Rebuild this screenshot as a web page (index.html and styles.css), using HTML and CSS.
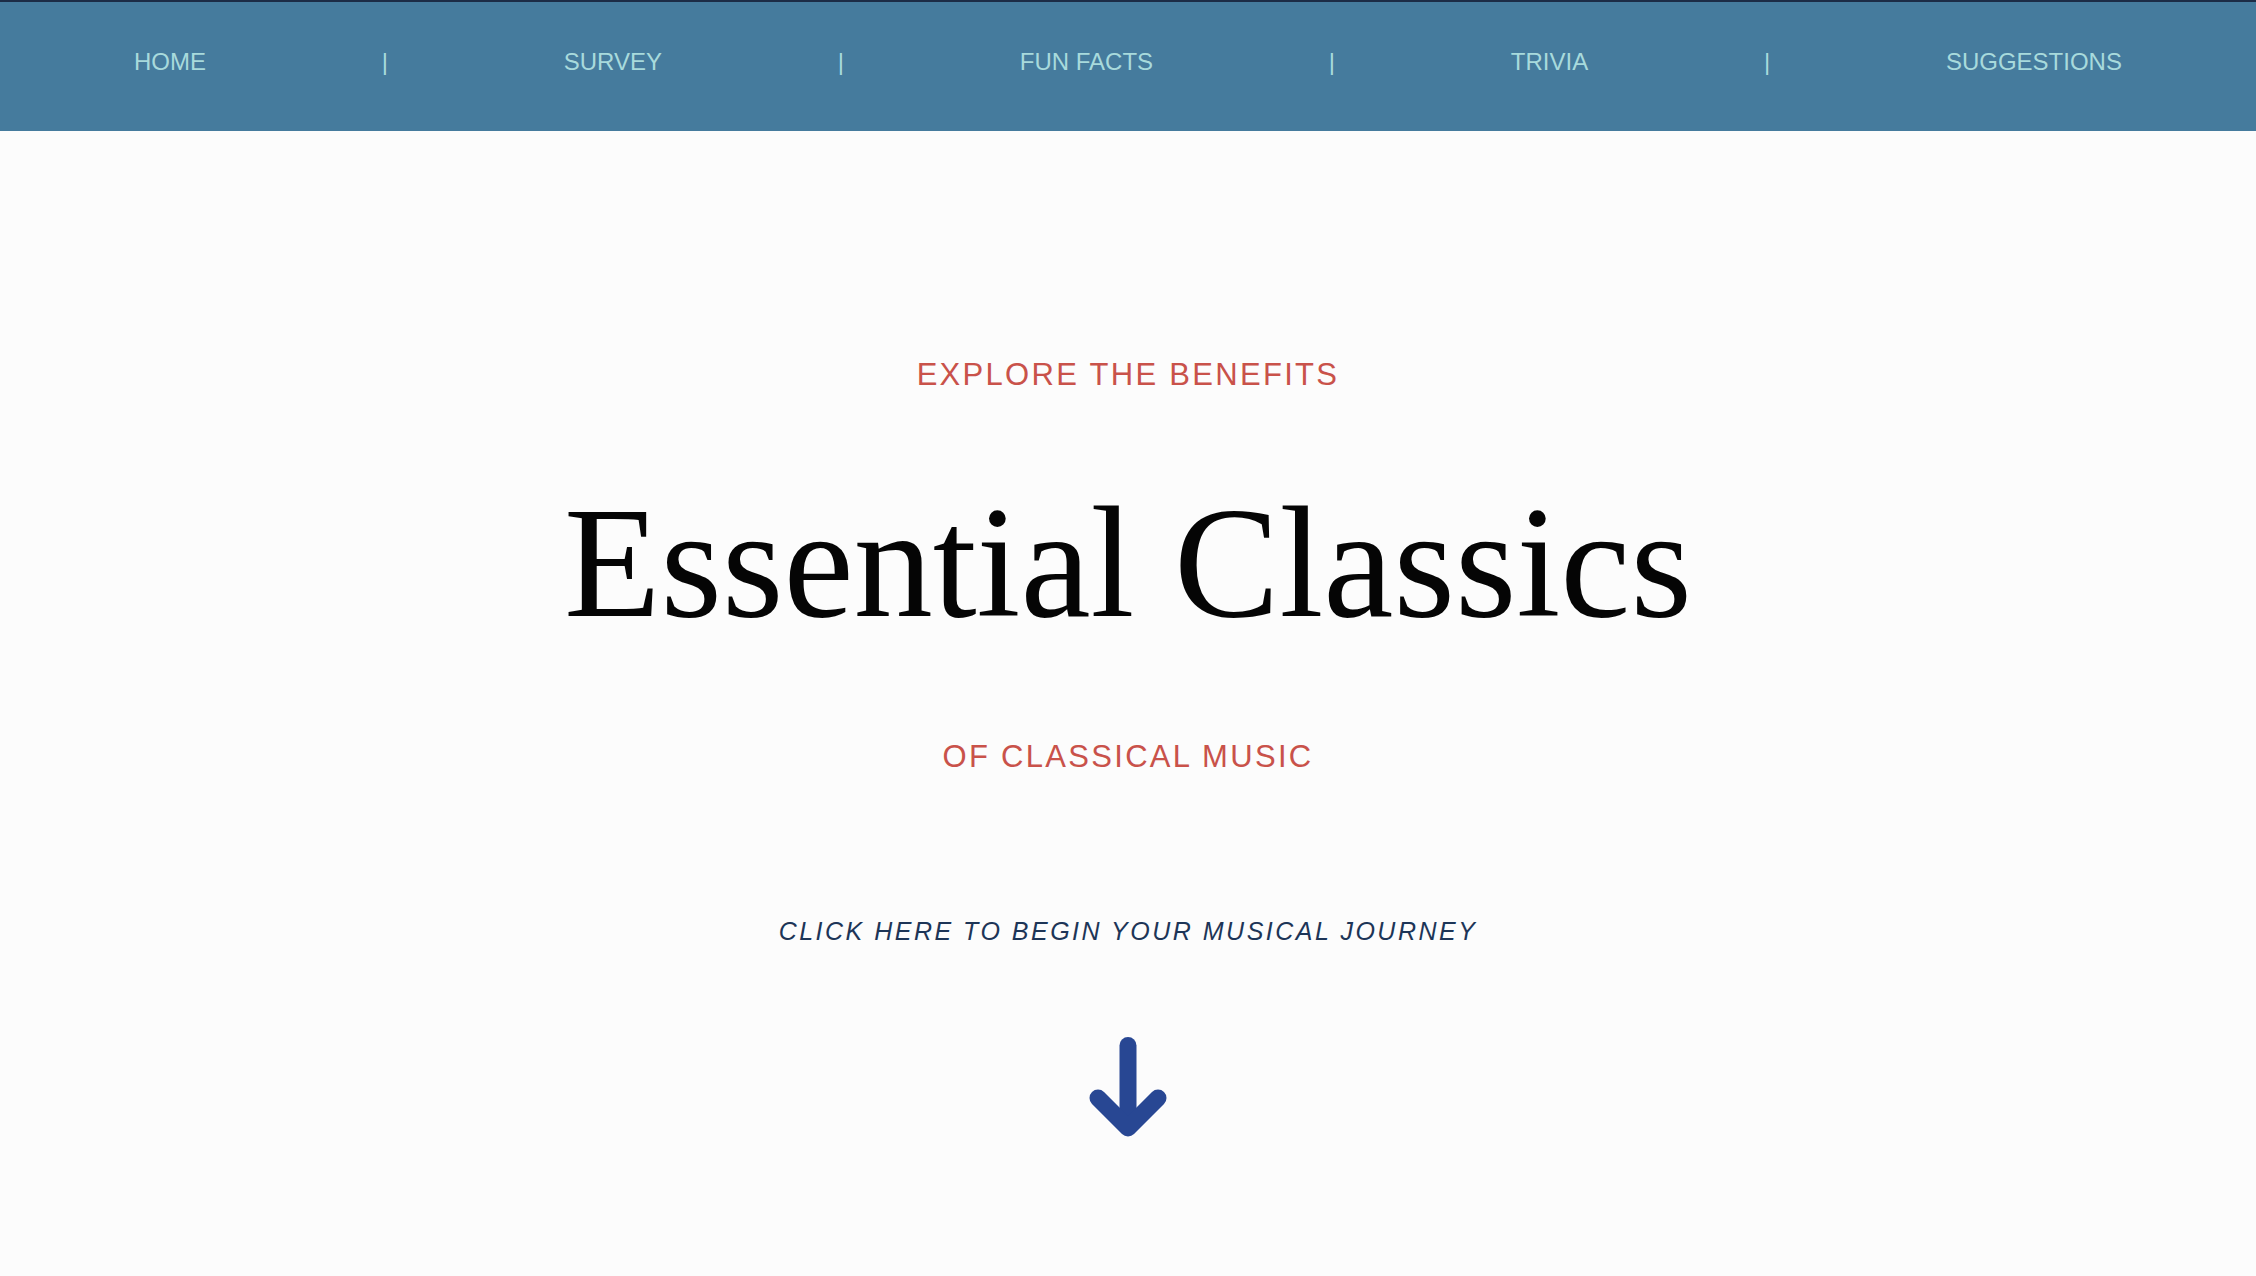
FILE: index.html
```html
<!DOCTYPE html>
<html lang="en">
<head>
<meta charset="utf-8">
<title>Essential Classics</title>
<link rel="stylesheet" href="styles.css">
</head>
<body>
<nav class="topnav">
  <a class="nav-link" href="#">HOME</a>
  <span class="nav-sep">|</span>
  <a class="nav-link" href="#">SURVEY</a>
  <span class="nav-sep">|</span>
  <a class="nav-link" href="#">FUN FACTS</a>
  <span class="nav-sep">|</span>
  <a class="nav-link" href="#">TRIVIA</a>
  <span class="nav-sep">|</span>
  <a class="nav-link" href="#">SUGGESTIONS</a>
</nav>
<main class="hero">
  <p class="kicker kicker-top">EXPLORE THE BENEFITS</p>
  <h1 class="title">Essential Classics</h1>
  <p class="kicker kicker-bottom">OF CLASSICAL MUSIC</p>
  <a class="cta" href="#">CLICK HERE TO BEGIN YOUR MUSICAL JOURNEY</a>
  <a class="arrow-link" href="#" aria-label="Scroll down">
    <svg class="arrow" width="80" height="104" viewBox="0 0 80 104">
      <line x1="40" y1="10.5" x2="40" y2="90" stroke="#284793" stroke-width="17" stroke-linecap="round"/>
      <polyline points="10,63 40,93 70,63" fill="none" stroke="#284793" stroke-width="17" stroke-linecap="round" stroke-linejoin="round"/>
    </svg>
  </a>
</main>
</body>
</html>
```

FILE: styles.css
```css
html, body {
  margin: 0;
  padding: 0;
}

body {
  background: #fcfcfc;
  font-family: "Liberation Sans", Arial, sans-serif;
  min-height: 1276px;
}

.topnav {
  box-sizing: border-box;
  height: 131px;
  background: #457b9d;
  border-top: 2px solid #1c2c46;
  display: flex;
  justify-content: space-between;
  align-items: center;
  padding: 0 134px 10px;
}

.nav-link,
.nav-sep {
  color: #a8dadc;
  font-size: 24px;
  line-height: 1;
  text-decoration: none;
}

.hero {
  display: flex;
  flex-direction: column;
  align-items: center;
  padding-top: 228px;
}

.kicker {
  margin: 0;
  color: #c9524a;
  font-size: 31px;
  line-height: 1;
  letter-spacing: 2.3px;
}

.title {
  margin: 94px 0 0;
  font-family: "Liberation Serif", "Times New Roman", serif;
  font-weight: 400;
  font-size: 158px;
  line-height: 1;
  color: #050505;
}

.kicker-bottom {
  margin-top: 99px;
}

.cta {
  margin-top: 147px;
  color: #1d3557;
  font-size: 25px;
  font-style: italic;
  line-height: 1;
  letter-spacing: 2.5px;
  text-decoration: none;
}

.arrow-link {
  display: block;
  margin-top: 91px;
  line-height: 0;
}

.arrow {
  display: block;
}
```
